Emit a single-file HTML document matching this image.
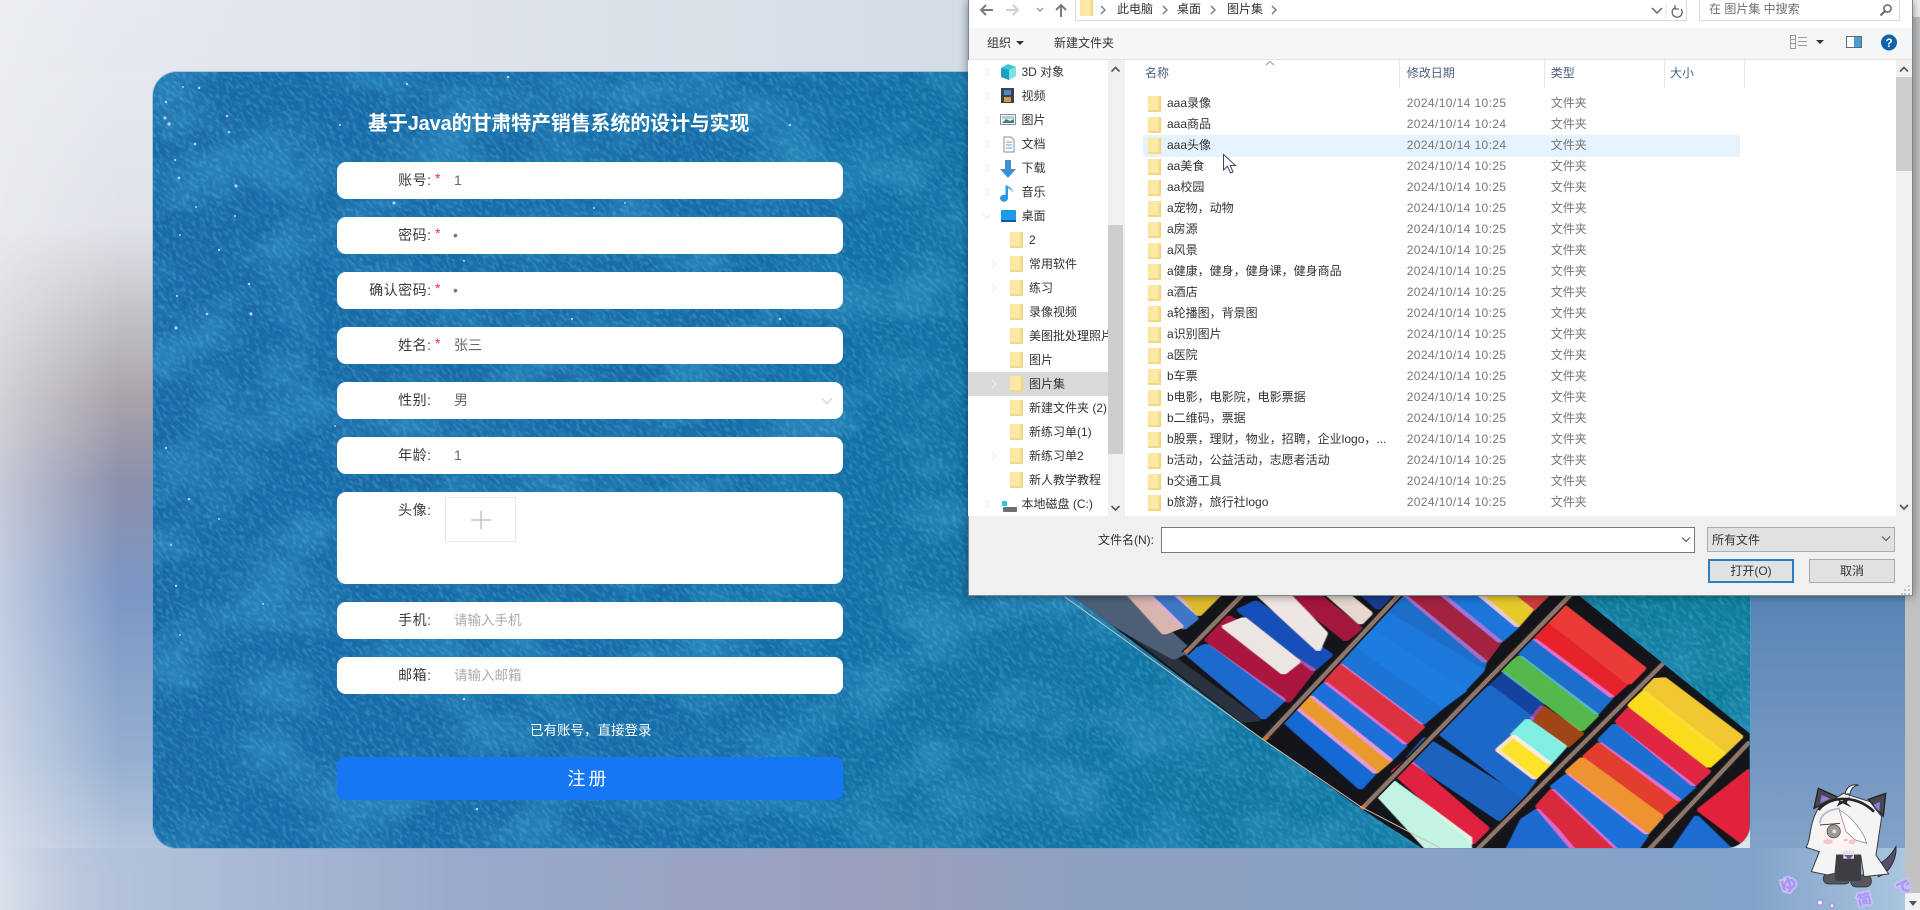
<!DOCTYPE html>
<html lang="zh-CN">
<head>
<meta charset="utf-8">
<title>注册</title>
<style>
*{box-sizing:border-box;margin:0;padding:0}
html,body{width:1920px;height:910px;overflow:hidden;background:#dfe4ec;font-family:"Liberation Sans","Noto Sans CJK SC",sans-serif}
.a{position:absolute}
#bgL{left:0;top:0;width:1000px;height:910px;background:linear-gradient(90deg,rgba(238,240,244,.6) 0,rgba(238,240,244,0) 120px),linear-gradient(180deg,#e9ecf1 0,#dfe2e8 25%,#a9a2a9 44%,#8b90ab 53%,#7c96c4 65%,#95aed0 83%,#bccade 96%)}
#bgT{left:0;top:0;width:1000px;height:72px;background:linear-gradient(90deg,rgba(212,220,230,0) 0,#e2e6ec 300px,#d4dce6 960px)}
#bgB{left:0;top:848px;width:1920px;height:62px;background:linear-gradient(90deg,rgba(181,196,218,0) 0,#b0c0d8 153px,#98a9cb 480px,#9a9fbc 900px,#8fa0c0 1050px,#82a2c9 1750px,#a9c6de 1905px)}
#bgR{left:1750px;top:500px;width:170px;height:348px;background:linear-gradient(180deg,#4f7fb2 0,#5a85b5 30%,#82a2c9 100%)}
#sb{left:1905px;top:0;width:15px;height:910px;background:#f1f1f1}
#sb i{position:absolute;left:0;top:17px;width:15px;height:876px;background:#c1c1c1}
#sb b{position:absolute;left:4px;bottom:4px;border:4px solid transparent;border-top:5px solid #555;border-bottom:0}
#card{left:153px;top:72px;width:1597px;height:776px;border-radius:24px;overflow:hidden;background:linear-gradient(95deg,#1a69a6 0,#176ca7 35%,#1274a4 60%,#0f7d9a 100%);box-shadow:0 0 0 1px rgba(90,160,210,.45)}
.row{position:absolute;left:337px;width:506px;height:37px;background:#fff;border-radius:9px;filter:blur(.25px)}
.lb{position:absolute;left:0;width:94.500px;text-align:right;font-size:14px;letter-spacing:.5px;color:#3a3a3a;line-height:37px;top:0;white-space:nowrap}
.st{position:absolute;left:98px;top:-2px;color:#e8304a;font-size:14px;line-height:37px}
.v{position:absolute;left:117px;top:0;font-size:14px;line-height:37px;color:#666}
.ph{color:#aaa;font-size:13.5px}
#w{left:0;top:0;width:1920px;height:910px;pointer-events:none;filter:blur(.3px)}
#dlg{left:968px;top:0;width:945px;height:596px;background:#f0f0f0;border:1px solid #7d8790;border-top:0;box-shadow:0 0 9px rgba(0,0,0,.45)}
.p{position:absolute;white-space:nowrap;font-size:12px;color:#333;line-height:16px}
.g{color:#777}
.nav{left:968px;top:60px;width:140px;height:456px;background:#fff;overflow:hidden}
.nav div{position:absolute;left:0;width:140px;height:24px;line-height:24px;font-size:12px;color:#333;white-space:nowrap}
.nav .t{padding-left:53.500px}
.nav .s{padding-left:61px}
.nav .s::before,.rows div::before{content:"";position:absolute;width:13px;height:16px;background:linear-gradient(90deg,#fbe69f 0,#fdeaa9 70%,#f0cf74 100%);box-shadow:inset 0 -2px 0 #f3d783}
.nav .s::before{left:42px;top:4px}
.nav .sel{background:#d9d9d9;height:24px}
.lst{left:1125px;top:60px;width:771px;height:456px;background:#fff;overflow:hidden}
.lst .hd{position:absolute;top:5px;font-size:12px;color:#4c607a;line-height:16px}
.lst .sp{position:absolute;top:0;width:1px;height:28px;background:#e5e5e5}
.rows{position:absolute;left:0;top:33.200px;width:771px}
.rows div{position:relative;height:21.020px;line-height:21px;font-size:12px;color:#333;white-space:nowrap}
.rows div::before{left:23px;top:2.500px}
.rows span{position:absolute;top:0}
.rows .n{left:42px}
.rows .d{left:281.700px;color:#777;letter-spacing:.4px}
.rows .y{left:425.700px;color:#777}
#hl{position:absolute;left:17.700px;top:75px;width:597.300px;height:21.500px;background:#e5f3ff}
</style>
</head>
<body>
<div class="a" id="bgL"></div>
<div class="a" id="bgT"></div>
<div class="a" id="bgR"></div>
<div class="a" id="bgB"></div>
<div class="a" id="sb"><i></i><b></b></div>

<div class="a" id="card">
  <svg class="a" style="left:0;top:0" width="1597" height="776" xmlns="http://www.w3.org/2000/svg">
    <defs>
      <filter id="fa" x="0" y="0" width="100%" height="100%"><feTurbulence type="fractalNoise" baseFrequency="0.3" numOctaves="2" seed="4"/><feConvolveMatrix order="7" divisor="7" preserveAlpha="false" kernelMatrix="1 0 0 0 0 0 0 0 1 0 0 0 0 0 0 0 1 0 0 0 0 0 0 0 1 0 0 0 0 0 0 0 1 0 0 0 0 0 0 0 1 0 0 0 0 0 0 0 1"/><feColorMatrix values="0 0 0 0 .12  0 0 0 0 .60  0 0 0 0 .80  5 0 0 0 -2.300"/></filter>
      <filter id="fb" x="0" y="0" width="100%" height="100%"><feTurbulence type="fractalNoise" baseFrequency="0.012 0.016" numOctaves="4" seed="11"/><feColorMatrix values="0 0 0 0 .04  0 0 0 0 .30  0 0 0 0 .58  3 0 0 0 -1.250"/></filter>
    </defs>
    <rect width="1597" height="776" filter="url(#fb)" opacity=".5"/>
    <rect width="1597" height="776" filter="url(#fa)" opacity=".28"/>
    <g fill="#dfe3ee" opacity=".8">
    <circle cx="13" cy="30" r="1.200"/><circle cx="30" cy="15" r="1"/><circle cx="46" cy="16" r="1.200"/><circle cx="12" cy="46" r="1.600"/><circle cx="16" cy="52" r="1.600"/><circle cx="74" cy="44" r="1.300"/><circle cx="76" cy="60" r="1.300"/><circle cx="42" cy="72" r="1.400"/><circle cx="22" cy="88" r="1.100"/><circle cx="26" cy="106" r="1.400"/><circle cx="83" cy="114" r="1.600"/><circle cx="43" cy="135" r="1"/><circle cx="82" cy="144" r="1"/><circle cx="27" cy="163" r="1"/><circle cx="66" cy="178" r="1.200"/><circle cx="96" cy="212" r="1.300"/><circle cx="54" cy="242" r="1.300"/><circle cx="98" cy="242" r="1.600"/><circle cx="24" cy="224" r="1.100"/><circle cx="23" cy="256" r="1.600"/><circle cx="13" cy="376" r="1.100"/><circle cx="36" cy="427" r="1.300"/><circle cx="18" cy="473" r="1"/><circle cx="66" cy="447" r="1"/><circle cx="23" cy="514" r="1.200"/><circle cx="110" cy="532" r="1"/><circle cx="27" cy="563" r="1"/><circle cx="355" cy="5" r="1.300"/><circle cx="254" cy="12" r="1.200"/><circle cx="187" cy="53" r="1.200"/><circle cx="637" cy="53" r="1.300"/><circle cx="241" cy="131" r="1.600"/><circle cx="441" cy="136" r="1"/><circle cx="472" cy="131" r="1"/><circle cx="311" cy="189" r="1"/><circle cx="419" cy="247" r="1.200"/><circle cx="627" cy="247" r="1.300"/><circle cx="182" cy="354" r="1"/><circle cx="311" cy="627" r="1.300"/><circle cx="324" cy="737" r="1.300"/>
    </g>
  </svg>
  <svg class="a" style="left:847px;top:518px" width="780" height="258" viewBox="0 0 1568 774" preserveAspectRatio="none" xmlns="http://www.w3.org/2000/svg">
    <defs>
      <clipPath id="cs"><polygon points="130,0 1150,0 1507,430 1507,810 885,810 725,655 530,450"/></clipPath>
      <filter id="dil" x="0" y="0" width="100%" height="100%"><feMorphology operator="dilate" radius="4 3"/><feGaussianBlur stdDeviation="1 .5"/></filter>
    </defs>
    <g clip-path="url(#cs)">
      <rect width="1568" height="810" fill="#14141b"/>
      <g filter="url(#dil)">
      <polygon points="130,15 260,15 380,180 350,205 270,140" fill="#4e5f76"/>
      <polygon points="260,15 300,15 365,110 330,130" fill="#d9b5b0"/>
      <polygon points="300,15 355,15 395,85 370,115" fill="#3e78c8"/>
      <polygon points="355,15 440,15 400,75" fill="#dcbb2e"/>
      <polygon points="270,140 350,205 520,390 490,395" fill="#2a3140"/>
      <polygon points="375,190 415,165 570,330 530,385" fill="#1b6bcd"/>
      <polygon points="415,150 460,80 630,240 580,335" fill="#ab1740"/>
      <polygon points="480,60 515,35 665,195 630,240" fill="#1450b8"/>
      <polygon points="450,110 490,85 600,215 570,250" fill="#ece6e2"/>
      <polygon points="520,15 580,15 655,130 640,180" fill="#eee6e2"/>
      <polygon points="580,15 640,15 725,115 695,150" fill="#a3183c"/>
      <polygon points="660,15 700,15 745,70 725,100" fill="#e6d8cc"/>
      <polygon points="730,15 790,15 760,55" fill="#173e8f"/>
      <polygon points="565,385 595,355 755,545 725,595" fill="#1767d3"/>
      <polygon points="595,350 625,320 785,510 755,548" fill="#e89a2e"/>
      <polygon points="625,315 655,280 815,465 785,510" fill="#1b6fd8"/>
      <polygon points="655,275 685,225 850,410 815,460" fill="#dc3040"/>
      <polygon points="685,215 715,170 890,350 850,400" fill="#1d74d2"/>
      <polygon points="715,165 745,120 935,300 890,350" fill="#1e7ce0"/>
      <polygon points="745,115 780,70 970,240 935,295" fill="#1b78da"/>
      <polygon points="780,65 815,20 975,215 970,240" fill="#1c6ec8"/>
      <polygon points="815,15 890,15 1005,155 975,215" fill="#a3243f"/>
      <polygon points="890,15 965,15 1040,110 1005,155" fill="#1a75d8"/>
      <polygon points="965,15 1030,15 1068,60 1040,108" fill="#e8c92a"/>
      <polygon points="1030,15 1100,15 1070,60" fill="#cf3a3e"/>
      <polygon points="885,430 985,290 1070,385 1000,480 1075,570 1050,620" fill="#1c68c8"/>
      <polygon points="820,505 855,445 1050,625 1005,690" fill="#1a62bf"/>
      <polygon points="790,545 820,510 980,715 950,760" fill="#e0203f"/>
      <polygon points="760,615 790,575 945,745 945,810 880,810" fill="#c3f3e2"/>
      <polygon points="1000,480 1035,435 1105,520 1075,565" fill="#fbe32a"/>
      <polygon points="1030,435 1060,390 1135,470 1105,520" fill="#80eee0"/>
      <polygon points="1070,385 1090,350 1170,430 1140,470" fill="#a04418"/>
      <polygon points="985,290 1015,250 1090,340 1070,380" fill="#17439f"/>
      <polygon points="1010,240 1045,200 1200,375 1170,420" fill="#54b84c"/>
      <polygon points="1045,190 1075,150 1230,320 1200,370" fill="#1a6ecc"/>
      <polygon points="1075,145 1105,100 1260,280 1230,320" fill="#e6202c"/>
      <polygon points="1105,95 1135,50 1295,235 1265,280" fill="#ea3a38"/>
      <polygon points="1010,810 1050,690 1080,660 1180,810" fill="#1b6ad0"/>
      <polygon points="1080,650 1110,600 1260,810 1170,810" fill="#d92c3c"/>
      <polygon points="1110,590 1140,555 1300,735 1265,810" fill="#1b6fd8"/>
      <polygon points="1140,545 1170,505 1330,680 1300,730" fill="#ee9330"/>
      <polygon points="1175,500 1205,460 1365,630 1330,675" fill="#e23c2e"/>
      <polygon points="1205,450 1235,405 1395,590 1365,630" fill="#1a6ed0"/>
      <polygon points="1240,395 1265,355 1425,545 1395,585" fill="#e0283f"/>
      <polygon points="1265,345 1295,305 1455,490 1425,530" fill="#fbdc1e"/>
      <polygon points="1300,270 1335,265 1490,440 1455,490 1295,305" fill="#f0c830"/>
      <polygon points="1405,660 1507,540 1507,755 1495,760" fill="#e2243a"/>
      <polygon points="1340,810 1400,680 1490,810" fill="#1a6cd2"/>
      </g>
      <g fill="none">
        <g stroke="#201b1c" stroke-width="18"><path d="M490 10 372 190M805 10 530 450M1150 10 725 660M1340 210 945 800M1507 455 1285 810"/></g>
        <g stroke="#8d766b" stroke-width="10"><path d="M490 10 372 190M805 10 530 450M1150 10 725 660M1340 210 945 800M1507 455 1285 810"/></g>
      </g>
      <path d="M372 185l8-6M530 450l8-8M725 655l10-10" stroke="#e0701e" stroke-width="8"/>
    </g>
    <path d="M130 20 530 450 725 650 885 774" fill="none" stroke="#c9c0b8" stroke-width="2.500"/>
  </svg>
</div>

<div class="a" style="left:368px;top:110px;font-size:20px;font-weight:700;color:#fff;line-height:28px;white-space:nowrap;letter-spacing:-.15px;filter:blur(.25px)">基于Java的甘肃特产销售系统的设计与实现</div>

<div class="row" style="top:162px"><span class="lb">账号:</span><span class="st">*</span><span class="v">1</span></div>
<div class="row" style="top:217px"><span class="lb">密码:</span><span class="st">*</span><span class="v" style="left:116px;color:#777">•</span></div>
<div class="row" style="top:272px"><span class="lb">确认密码:</span><span class="st">*</span><span class="v" style="left:116px;color:#777">•</span></div>
<div class="row" style="top:327px"><span class="lb">姓名:</span><span class="st">*</span><span class="v">张三</span></div>
<div class="row" style="top:382px"><span class="lb">性别:</span><span class="v">男</span>
  <svg class="a" style="left:484px;top:15px" width="12" height="9" xmlns="http://www.w3.org/2000/svg"><path d="M1 1.500 6 6.500 11 1.500" fill="none" stroke="#c8ccd4" stroke-width="1.100"/></svg></div>
<div class="row" style="top:437px"><span class="lb">年龄:</span><span class="v">1</span></div>
<div class="row" style="top:492px;height:92px"><span class="lb">头像:</span>
  <div class="a" style="left:108px;top:5px;width:71px;height:45px;border:1px solid #e6e6e6"></div>
  <svg class="a" style="left:134px;top:19px" width="20" height="18" xmlns="http://www.w3.org/2000/svg"><path d="M0 9H20M10 0V18" stroke="#bbb" stroke-width="1.300"/></svg></div>
<div class="row" style="top:602px"><span class="lb">手机:</span><span class="v ph">请输入手机</span></div>
<div class="row" style="top:657px"><span class="lb">邮箱:</span><span class="v ph">请输入邮箱</span></div>
<div class="a" style="left:530px;top:721px;font-size:13.500px;color:#fff;line-height:20px;white-space:nowrap">已有账号，直接登录</div>
<div class="a" style="left:337px;top:757px;width:506px;height:43px;background:#1677f5;border-radius:8px"></div>
<div class="a" style="left:567.500px;top:766px;font-size:18px;color:#fff;line-height:27px;white-space:nowrap;word-spacing:-2px">注 册</div>

<!-- mascot -->
<svg class="a" style="left:1740px;top:760px" width="180" height="150" viewBox="0 0 540 450" xmlns="http://www.w3.org/2000/svg">
  <path d="M405 315C430 310 450 290 468 260 470 290 455 335 415 350Z" fill="#56506a" stroke="#2c2a33" stroke-width="3"/>
  <polygon points="222,145 235,85 295,112" fill="#4a4650" stroke="#222" stroke-width="4"/>
  <polygon points="240,130 245,105 270,116" fill="#8d7be0"/>
  <polygon points="385,118 437,100 430,168" fill="#4a4650" stroke="#222" stroke-width="4"/>
  <polygon points="400,135 420,125 418,155" fill="#8d7be0"/>
  <path d="M315 102Q322 70 356 75Q334 78 330 102Z" fill="#fff" stroke="#333" stroke-width="3"/>
  <rect x="250" y="340" width="80" height="32" rx="15" fill="#56555d" stroke="#2a2a2e" stroke-width="2"/>
  <rect x="332" y="345" width="62" height="36" rx="16" fill="#56555d" stroke="#2a2a2e" stroke-width="2"/>
  <rect x="285" y="285" width="78" height="78" rx="8" fill="#3d3d43"/>
  <path d="M232 150C205 200 215 235 198 262L238 275 214 335 262 345 285 340 290 285 362 285 372 350 446 342 408 285 425 170 390 125 310 100Z" fill="#f4f4f4" stroke="#3b3b40" stroke-width="3"/>
  <rect x="310" y="272" width="32" height="24" fill="#e8dfe6"/>
  <path d="M312 285l15 14 14-14" fill="#6a5aa0"/>
  <ellipse cx="298" cy="225" rx="58" ry="46" fill="#fff4ef"/>
  <circle cx="281" cy="214" r="20" fill="#9a9a9a" stroke="#444" stroke-width="2"/>
  <circle cx="283" cy="214" r="6" fill="#e8e6c4"/>
  <path d="M240 195 300 190" stroke="#444" stroke-width="3"/>
  <ellipse cx="264" cy="245" rx="14" ry="8" fill="#f6c5cc"/>
  <ellipse cx="336" cy="246" rx="11" ry="7" fill="#f6c5cc"/>
  <path d="M312 240h10" stroke="#a55" stroke-width="2"/>
  <path d="M298 150C330 165 372 215 380 250L346 240 318 215Z" fill="#fcfcfc" stroke="#777" stroke-width="2"/>
  <path d="M240 190C240 170 255 150 300 145" fill="none" stroke="#bdbdc4" stroke-width="6"/>
  <path d="M236 150C260 112 345 98 402 155" fill="none" stroke="#242428" stroke-width="8"/>
  <path d="M285 112 305 124 330 110 320 128 335 142 308 130 290 140 298 124Z" fill="#242428"/>
  <g font-family="Noto Sans CJK JP,Noto Sans CJK SC,sans-serif" font-weight="900" fill="#a897f0" stroke="#c9bff8" stroke-width="10" paint-order="stroke">
    <text x="0" y="0" font-size="50" transform="translate(128 400) rotate(-18)">ゆ</text>
    <text x="0" y="0" font-size="42" transform="translate(356 438) rotate(-14)">简</text>
    <text x="0" y="0" font-size="46" transform="translate(476 405) rotate(-22)">で</text>
  </g>
  <circle cx="240" cy="428" r="8" fill="#fff" stroke="#a594ee" stroke-width="5"/>
  <circle cx="276" cy="437" r="6" fill="#fff" stroke="#a594ee" stroke-width="4"/>
</svg>

<!-- Dialog -->
<div class="a" id="w">
  <div class="a" id="dlg"></div>
  <div class="a" style="left:969px;top:0;width:943px;height:28px;background:#fff"></div>
  <div class="a" style="left:969px;top:28px;width:943px;height:32px;background:#f5f6f7;border-bottom:1px solid #e5e5e5"></div>

  <!-- address bar -->
  <svg class="a" style="left:978px;top:2px" width="100" height="18" xmlns="http://www.w3.org/2000/svg">
    <path d="M15 8H3M8 3 3 8 8 13" fill="none" stroke="#7a7a7a" stroke-width="2"/>
    <path d="M28 8H40M35 3 40 8 35 13" fill="none" stroke="#d0d0d0" stroke-width="2"/>
    <path d="M59 6 62 9 65 6" fill="none" stroke="#9a9a9a" stroke-width="1.400"/>
    <path d="M83 15V3M78 8 83 3 88 8" fill="none" stroke="#7a7a7a" stroke-width="2"/>
  </svg>
  <div class="a" style="left:1075px;top:0;width:612px;height:21px;background:#fff;border:1px solid #d9d9d9;border-top:0"></div>
  <div class="a" style="left:1080px;top:0;width:13px;height:16px;background:linear-gradient(90deg,#fbe69f,#fdeaa9 70%,#f0cf74)"></div>
  <div class="p" style="left:1117px;top:1px">此电脑</div>
  <div class="p" style="left:1177px;top:1px">桌面</div>
  <div class="p" style="left:1227px;top:1px">图片集</div>
  <svg class="a" style="left:1100px;top:5px" width="180" height="10" xmlns="http://www.w3.org/2000/svg">
    <g fill="none" stroke="#777" stroke-width="1.300"><path d="M1 1 5 5 1 9M63 1 67 5 63 9M111 1 115 5 111 9M172 1 176 5 172 9"/></g></svg>
  <svg class="a" style="left:1650px;top:4px" width="36" height="14" xmlns="http://www.w3.org/2000/svg">
    <path d="M2 4 7 9 12 4" fill="none" stroke="#666" stroke-width="1.500"/><path d="M16 0V14" stroke="#e0e0e0"/>
    <path d="M31 5A5 5 0 1 1 25 3.700M25 1V5H29" fill="none" stroke="#666" stroke-width="1.300"/></svg>
  <div class="a" style="left:1699px;top:0;width:201px;height:21px;background:#fff;border:1px solid #d9d9d9;border-top:0"></div>
  <div class="p g" style="left:1709px;top:1px;color:#6d6d6d">在 图片集 中搜索</div>
  <svg class="a" style="left:1879px;top:3px" width="14" height="14" xmlns="http://www.w3.org/2000/svg"><circle cx="8.500" cy="5.500" r="3.600" fill="none" stroke="#666" stroke-width="1.500"/><path d="M6 8 1.500 12.500" stroke="#666" stroke-width="2"/></svg>

  <!-- toolbar -->
  <div class="p" style="left:987px;top:35px">组织</div>
  <div class="a" style="left:1016px;top:41px;border:4px solid transparent;border-top:4px solid #333;border-bottom:0"></div>
  <div class="p" style="left:1054px;top:35px">新建文件夹</div>
  <svg class="a" style="left:1788px;top:32px" width="115" height="22" xmlns="http://www.w3.org/2000/svg">
    <g stroke="#9a9a9a" fill="none"><rect x="2.500" y="3.500" width="5" height="13"/><path d="M2.500 7.500H7.500M2.500 11.500H7.500M10 5.500H19M10 9.500H19M10 13.500H19"/></g>
    <path d="M28 8H36L32 12Z" fill="#333"/>
    <rect x="58.500" y="4.500" width="15" height="11" fill="#fff" stroke="#666"/><rect x="66" y="5" width="7" height="10" fill="#4a9ad8"/>
    <circle cx="101" cy="10.500" r="8" fill="#0f62b0"/>
    <text x="101" y="15" text-anchor="middle" font-size="12" font-weight="700" fill="#fff" font-family="Liberation Sans,sans-serif">?</text>
  </svg>

  <!-- Nav -->
  <div class="a nav">
    <div class="sel" style="top:312px"></div>
    <div class="t" style="top:0">3D 对象</div>
    <div class="t" style="top:24px">视频</div>
    <div class="t" style="top:48px">图片</div>
    <div class="t" style="top:72px">文档</div>
    <div class="t" style="top:96px">下载</div>
    <div class="t" style="top:120px">音乐</div>
    <div class="t" style="top:144px">桌面</div>
    <div class="s" style="top:168px">2</div>
    <div class="s" style="top:192px">常用软件</div>
    <div class="s" style="top:216px">练习</div>
    <div class="s" style="top:240px">录像视频</div>
    <div class="s" style="top:264px;overflow:hidden">美图批处理照片</div>
    <div class="s" style="top:288px">图片</div>
    <div class="s" style="top:312px">图片集</div>
    <div class="s" style="top:336px">新建文件夹 (2)</div>
    <div class="s" style="top:360px">新练习单(1)</div>
    <div class="s" style="top:384px">新练习单2</div>
    <div class="s" style="top:408px">新人教学教程</div>
    <div class="t" style="top:432px">本地磁盘 (C:)</div>
  </div>
  <svg class="a" style="left:968px;top:60px" width="56" height="456" xmlns="http://www.w3.org/2000/svg">
    <g fill="none" stroke="#ececec" stroke-width="1.200"><path d="M17 8l4 4-4 4M17 32l4 4-4 4M17 56l4 4-4 4M17 80l4 4-4 4M17 104l4 4-4 4M17 128l4 4-4 4M15 154l4 4 4-4M24 200l4 4-4 4M24 224l4 4-4 4M24 320l4 4-4 4M24 392l4 4-4 4M17 440l4 4-4 4"/></g>
    <polygon points="33,8 40,4 48,7 48,16 41,20 33,17" fill="#3cc6d6"/><polygon points="41,10 48,7 48,16 41,20" fill="#7be3e4"/><polygon points="33,8 41,10 41,20 33,17" fill="#19a2c2"/>
    <rect x="33" y="28" width="13" height="15" fill="#3a4150"/><rect x="36" y="30" width="7" height="5" fill="#4f86c6"/><rect x="36" y="37" width="7" height="5" fill="#c9a23c"/>
    <rect x="32.500" y="54.500" width="15" height="10" fill="#f3f6f9" stroke="#8a8f98"/><path d="M34 63l4-4 4 2 4-2v4z" fill="#4f7a6c"/><rect x="34" y="56" width="12" height="3" fill="#a8cdea"/>
    <path d="M36 77H43L46 80V92H36Z" fill="#fff" stroke="#8a8f98"/><path d="M38 82H44M38 85H44M38 88H44" stroke="#5aa0d8"/>
    <path d="M37 100H43V109H48L40 118 32 109H37Z" fill="#3f8ed6"/>
    <path d="M40 124V138A4 3.500 0 1 1 37.500 135V125C42 127 45 129 45 133 44 130 42 129 40 128Z" fill="#2d9ae0"/>
    <rect x="33" y="150" width="15" height="12" rx="1" fill="#1e9be8"/><path d="M33 161H48" stroke="#0f5a9c" stroke-width="2"/>
    <rect x="34" y="441" width="5" height="5" fill="#35c5d8"/><rect x="35" y="447" width="14" height="5" rx="1" fill="#6a6f75"/>
  </svg>
  <div class="a" style="left:1108px;top:60px;width:15px;height:456px;background:#f0f0f0"></div>
  <div class="a" style="left:1108px;top:225px;width:15px;height:229px;background:#cdcdcd"></div>
  <svg class="a" style="left:1108px;top:64px" width="15" height="450" xmlns="http://www.w3.org/2000/svg"><path d="M3.500 7.500 7.500 3.500 11.500 7.500M3.500 442 7.500 446 11.500 442" fill="none" stroke="#555" stroke-width="1.600"/></svg>

  <!-- List -->
  <div class="a lst">
    <div id="hl"></div>
    <div class="hd" style="left:20px">名称</div>
    <div class="hd" style="left:281.700px">修改日期</div>
    <div class="hd" style="left:425.700px">类型</div>
    <div class="hd" style="left:545px">大小</div>
    <div class="sp" style="left:274px"></div><div class="sp" style="left:419px"></div><div class="sp" style="left:539px"></div><div class="sp" style="left:619px"></div>
    <svg class="a" style="left:140px;top:0" width="10" height="6" xmlns="http://www.w3.org/2000/svg"><path d="M1 5 5 1.500 9 5" fill="none" stroke="#999"/></svg>
    <div class="rows">
      <div><span class="n">aaa录像</span><span class="d">2024/10/14 10:25</span><span class="y">文件夹</span></div>
      <div><span class="n">aaa商品</span><span class="d">2024/10/14 10:24</span><span class="y">文件夹</span></div>
      <div><span class="n">aaa头像</span><span class="d">2024/10/14 10:24</span><span class="y">文件夹</span></div>
      <div><span class="n">aa美食</span><span class="d">2024/10/14 10:25</span><span class="y">文件夹</span></div>
      <div><span class="n">aa校园</span><span class="d">2024/10/14 10:25</span><span class="y">文件夹</span></div>
      <div><span class="n">a宠物，动物</span><span class="d">2024/10/14 10:25</span><span class="y">文件夹</span></div>
      <div><span class="n">a房源</span><span class="d">2024/10/14 10:25</span><span class="y">文件夹</span></div>
      <div><span class="n">a风景</span><span class="d">2024/10/14 10:25</span><span class="y">文件夹</span></div>
      <div><span class="n">a健康，健身，健身课，健身商品</span><span class="d">2024/10/14 10:25</span><span class="y">文件夹</span></div>
      <div><span class="n">a酒店</span><span class="d">2024/10/14 10:25</span><span class="y">文件夹</span></div>
      <div><span class="n">a轮播图，背景图</span><span class="d">2024/10/14 10:25</span><span class="y">文件夹</span></div>
      <div><span class="n">a识别图片</span><span class="d">2024/10/14 10:25</span><span class="y">文件夹</span></div>
      <div><span class="n">a医院</span><span class="d">2024/10/14 10:25</span><span class="y">文件夹</span></div>
      <div><span class="n">b车票</span><span class="d">2024/10/14 10:25</span><span class="y">文件夹</span></div>
      <div><span class="n">b电影，电影院，电影票据</span><span class="d">2024/10/14 10:25</span><span class="y">文件夹</span></div>
      <div><span class="n">b二维码，票据</span><span class="d">2024/10/14 10:25</span><span class="y">文件夹</span></div>
      <div><span class="n">b股票，理财，物业，招聘，企业logo，...</span><span class="d">2024/10/14 10:25</span><span class="y">文件夹</span></div>
      <div><span class="n">b活动，公益活动，志愿者活动</span><span class="d">2024/10/14 10:25</span><span class="y">文件夹</span></div>
      <div><span class="n">b交通工具</span><span class="d">2024/10/14 10:25</span><span class="y">文件夹</span></div>
      <div><span class="n">b旅游，旅行社logo</span><span class="d">2024/10/14 10:25</span><span class="y">文件夹</span></div>
      <div></div>
    </div>
  </div>
  <div class="a" style="left:1896px;top:60px;width:16px;height:456px;background:#f0f0f0"></div>
  <div class="a" style="left:1896px;top:77px;width:16px;height:94px;background:#cdcdcd"></div>
  <svg class="a" style="left:1896px;top:64px" width="16" height="450" xmlns="http://www.w3.org/2000/svg"><path d="M4 7.500 8 3.500 12 7.500M4 441 8 445 12 441" fill="none" stroke="#555" stroke-width="1.600"/></svg>

  <!-- Cursor -->
  <svg class="a" style="left:1222px;top:153px" width="16" height="22" xmlns="http://www.w3.org/2000/svg"><path d="M1.500 1.500V17L5.500 13.200 8.500 20 11 19 8.200 12.500H13.500Z" fill="#fff" stroke="#3a4a5a" stroke-width="1"/></svg>

  <!-- Bottom -->
  <div class="p" style="left:1098px;top:532px">文件名(N):</div>
  <div class="a" style="left:1161px;top:527px;width:534px;height:26px;background:#fff;border:1px solid #7a7a7a"></div>
  <svg class="a" style="left:1681px;top:536px" width="10" height="8" xmlns="http://www.w3.org/2000/svg"><path d="M1 1.500 5 5.500 9 1.500" fill="none" stroke="#555" stroke-width="1.100"/></svg>
  <div class="a" style="left:1707px;top:527px;width:188px;height:25px;background:#e1e1e1;border:1px solid #adadad"></div>
  <div class="p" style="left:1712px;top:532px">所有文件</div>
  <svg class="a" style="left:1881px;top:535px" width="10" height="8" xmlns="http://www.w3.org/2000/svg"><path d="M1 1.500 5 5.500 9 1.500" fill="none" stroke="#555" stroke-width="1.100"/></svg>
  <div class="a" style="left:1708px;top:559px;width:86px;height:24px;background:#e1e1e1;border:2px solid #2a7ec4;text-align:center;font-size:12px;line-height:20px;color:#333">打开(O)</div>
  <div class="a" style="left:1809px;top:559px;width:86px;height:24px;background:#e1e1e1;border:1px solid #adadad;text-align:center;font-size:12px;line-height:22px;color:#333">取消</div>
  <svg class="a" style="left:1900px;top:584px" width="12" height="11" xmlns="http://www.w3.org/2000/svg"><g fill="#c4c4c4"><rect x="8" y="1" width="2" height="2"/><rect x="4" y="5" width="2" height="2"/><rect x="8" y="5" width="2" height="2"/><rect y="9" x="1" width="2" height="2"/><rect x="4" y="9" width="2" height="2"/><rect x="8" y="9" width="2" height="2"/></g></svg>
</div>
</body>
</html>
